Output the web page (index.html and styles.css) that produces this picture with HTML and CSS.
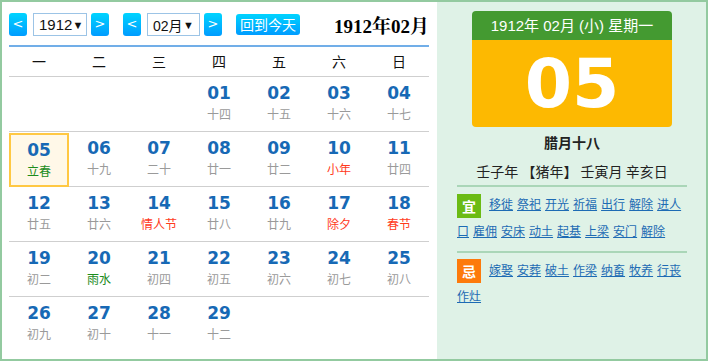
FILE: index.html
```html
<!DOCTYPE html>
<html lang="zh-CN">
<head>
  <meta charset="UTF-8" />
  <title>万年历</title>
  <link rel="stylesheet" href="styles.css">
</head>
<body>
  <div class="calendar">
    <div class="cal-main">
      <div class="toolbar">
        <span class="btn">&lt;</span>
        <span class="sel sel-year">1912<i>▼</i></span>
        <span class="btn">&gt;</span>
        <span class="btn btn-gap">&lt;</span>
        <span class="sel sel-month">02月<i>▼</i></span>
        <span class="btn">&gt;</span>
        <span class="btn-today">回到今天</span>
        <span class="title">1912年02月</span>
      </div>
      <div class="week">
        <span>一</span><span>二</span><span>三</span><span>四</span><span>五</span><span>六</span><span>日</span>
      </div>
      <div class="days">
        <div class="day"></div>
        <div class="day"></div>
        <div class="day"></div>
        <div class="day"><b>01</b><em>十四</em></div>
        <div class="day"><b>02</b><em>十五</em></div>
        <div class="day"><b>03</b><em>十六</em></div>
        <div class="day"><b>04</b><em>十七</em></div>

        <div class="day current"><b>05</b><em class="term">立春</em></div>
        <div class="day"><b>06</b><em>十九</em></div>
        <div class="day"><b>07</b><em>二十</em></div>
        <div class="day"><b>08</b><em>廿一</em></div>
        <div class="day"><b>09</b><em>廿二</em></div>
        <div class="day"><b>10</b><em class="fest">小年</em></div>
        <div class="day"><b>11</b><em>廿四</em></div>

        <div class="day"><b>12</b><em>廿五</em></div>
        <div class="day"><b>13</b><em>廿六</em></div>
        <div class="day"><b>14</b><em class="fest">情人节</em></div>
        <div class="day"><b>15</b><em>廿八</em></div>
        <div class="day"><b>16</b><em>廿九</em></div>
        <div class="day"><b>17</b><em class="fest">除夕</em></div>
        <div class="day"><b>18</b><em class="fest">春节</em></div>

        <div class="day"><b>19</b><em>初二</em></div>
        <div class="day"><b>20</b><em class="term">雨水</em></div>
        <div class="day"><b>21</b><em>初四</em></div>
        <div class="day"><b>22</b><em>初五</em></div>
        <div class="day"><b>23</b><em>初六</em></div>
        <div class="day"><b>24</b><em>初七</em></div>
        <div class="day"><b>25</b><em>初八</em></div>

        <div class="day last"><b>26</b><em>初九</em></div>
        <div class="day last"><b>27</b><em>初十</em></div>
        <div class="day last"><b>28</b><em>十一</em></div>
        <div class="day last"><b>29</b><em>十二</em></div>
      </div>
    </div>

    <div class="cal-side">
      <div class="today-card">
        <div class="card-head">1912年 02月 (小) 星期一</div>
        <div class="card-day">05</div>
      </div>
      <div class="lunar">腊月十八</div>
      <div class="ganzhi">壬子年 【猪年】 壬寅月 辛亥日</div>
      <div class="almanac"><span class="tag yi">宜</span><a href="#">移徙</a><a href="#">祭祀</a><a href="#">开光</a><a href="#">祈福</a><a href="#">出行</a><a href="#">解除</a><a href="#" class="split">进人</a><a href="#">口</a><a href="#">雇佣</a><a href="#">安床</a><a href="#">动土</a><a href="#">起基</a><a href="#">上梁</a><a href="#">安门</a><a href="#">解除</a></div>
      <div class="almanac"><span class="tag ji">忌</span><a href="#">嫁娶</a><a href="#">安葬</a><a href="#">破土</a><a href="#">作梁</a><a href="#">纳畜</a><a href="#">牧养</a><a href="#">行丧</a><a href="#">作灶</a></div>
    </div>
  </div>
</body>
</html>
```

FILE: styles.css
```css
body {
  margin: 0;
  font-family: "Noto Sans CJK SC", "Noto Sans", sans-serif;
  font-size: 14px;
  color: #222;
}
.calendar {
  width: 708px;
  height: 361px;
  box-sizing: border-box;
  border: 2px solid #93caa0;
  display: flex;
  background-color: #fff;
}
.cal-main {
  width: 435px;
  padding: 10px 8px 0 7px;
  box-sizing: border-box;
}
.toolbar {
  display: flex;
  align-items: center;
  height: 25px;
  padding-bottom: 8px;
  border-bottom: 2px solid #71aee8;
}
.btn {
  width: 18px;
  height: 23px;
  line-height: 22px;
  text-align: center;
  color: #fff;
  font-family: "DejaVu Sans", sans-serif;
  font-size: 13px;
  border-radius: 3px;
  background: linear-gradient(#00d4ff, #009cff);
  margin-right: 6px;
}
.btn-gap {
  margin-left: 8px;
}
.sel {
  display: flex;
  justify-content: space-between;
  align-items: center;
  height: 23px;
  box-sizing: border-box;
  border: 1px solid #9cc4e6;
  padding: 0 5px 0 5px;
  margin-right: 4px;
  font-size: 15px;
  font-family: "Liberation Sans", "Noto Sans CJK SC", sans-serif;
  color: #111;
  white-space: nowrap;
}
.sel i {
  font-style: normal;
  font-size: 11px;
}
.sel-year { width: 54px; }
.sel-month { width: 53px; font-size: 14px; }
.btn-today {
  margin-left: 8px;
  width: 64px;
  height: 21px;
  line-height: 20px;
  text-align: center;
  color: #fff;
  font-size: 14px;
  border-radius: 3px;
  background: linear-gradient(#00d4ff, #009cff);
}
.title {
  margin-left: auto;
  font-family: "Liberation Serif", "Noto Serif CJK SC", "Noto Sans CJK SC", serif;
  font-weight: bold;
  font-size: 19px;
  color: #000;
}
.week {
  display: grid;
  grid-template-columns: repeat(7, 60px);
  height: 29px;
  line-height: 29px;
  text-align: center;
  font-size: 14px;
  color: #111;
  border-bottom: 1px solid #cfcfcf;
}
.days {
  display: grid;
  grid-template-columns: repeat(7, 60px);
  grid-auto-rows: 55px;
}
.day {
  border-bottom: 1px solid #cfcfcf;
  box-sizing: border-box;
  text-align: center;
  display: flex;
  flex-direction: column;
  align-items: center;
  padding-top: 5px;
}
.day.last {
  border-bottom: none;
}
.day b {
  font-family: "DejaVu Sans", sans-serif;
  font-size: 17px;
  line-height: 22px;
  color: #1769b5;
}
.day em {
  font-style: normal;
  font-size: 12px;
  line-height: 20px;
  color: #9a9a9a;
}
.day em.fest { color: #ff3a1c; }
.day em.term { color: #1c8c1c; }
.day.current {
  border: 2px solid #ffc843;
  background-color: #fff8e8;
  padding-top: 4px;
  margin-top: 1px;
  height: 54px;
}
.cal-side {
  flex: 1;
  background-color: #dff2e7;
  padding: 9px 19px 0 20px;
  text-align: center;
}
.today-card {
  width: 200px;
  margin: 0 auto;
  border-radius: 4px;
  overflow: hidden;
}
.card-head {
  height: 29px;
  line-height: 29px;
  background-color: #449a31;
  color: #fff;
  font-family: "Liberation Sans", "Noto Sans CJK SC", sans-serif;
  font-size: 15px;
}
.card-day {
  height: 87px;
  line-height: 87px;
  background-color: #fdb901;
  color: #fff;
  font-family: "DejaVu Sans", sans-serif;
  font-weight: bold;
  font-size: 68px;
}
.lunar {
  margin-top: 5px;
  font-weight: bold;
  font-size: 14px;
  line-height: 20px;
}
.ganzhi {
  margin-top: 9px;
  font-size: 14px;
  line-height: 20px;
  padding-bottom: 4px;
  border-bottom: 2px solid #aad6b8;
}
.almanac {
  text-align: left;
  font-size: 12px;
  line-height: 26px;
  padding-top: 4px;
  padding-bottom: 7px;
  border-bottom: 2px solid #aad6b8;
}
.almanac:last-child {
  border-bottom: none;
}
.almanac a {
  color: #1d6bb4;
  margin-right: 4px;
}
.almanac a.split {
  margin-right: 0;
}
.tag {
  display: inline-block;
  vertical-align: middle;
  width: 24px;
  height: 24px;
  line-height: 24px;
  margin-right: 8px;
  text-align: center;
  color: #fff;
  font-size: 14px;
  font-weight: bold;
}
.tag.yi { background-color: #6bbb14; }
.tag.ji { background-color: #fd7a0b; }
```
